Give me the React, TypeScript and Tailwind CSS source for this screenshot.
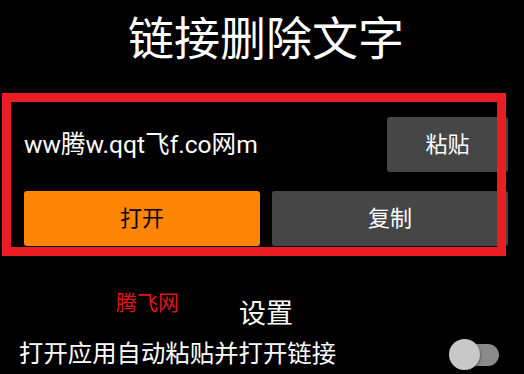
const sans = "font-['Roboto','Noto_Sans_CJK_SC',sans-serif]";

function Toggle() {
  return (
    <div className="relative h-[32px] w-[50px]">
      <div className="absolute left-[14px] top-[6px] h-[22px] w-[36px] rounded-full bg-[#8a8a8a]" />
      <div className="absolute left-0 top-[1px] h-[31px] w-[31px] rounded-full bg-[#c8c8c8] shadow-[0_1px_3px_rgba(0,0,0,0.6)]" />
    </div>
  );
}

export default function App() {
  return (
    <div className={`relative h-[374px] w-[524px] overflow-hidden bg-black text-white ${sans}`}>
      <div className="w-[532px] px-6">
        <h1 className="pt-[12px] text-center text-[46px] leading-[54px] text-white">链接删除文字</h1>

        <div className="mt-[51px] flex items-center">
          <div className="flex-1 text-[24.6px] leading-[55px] text-white">ww腾w.qqt飞f.co网m</div>
          <button className="h-[55px] w-[121px] rounded-[3px] bg-[#464646] text-[22px] text-white">粘贴</button>
        </div>

        <div className="mt-[19px] flex gap-3">
          <button className="h-[55px] flex-1 rounded-[3px] bg-[#ff8605] text-[22px] text-black">打开</button>
          <button className="h-[55px] flex-1 rounded-[3px] bg-[#464646] text-[22px] text-white">复制</button>
        </div>

        <div className="relative mt-[50px] text-center text-[27px] leading-[36px]">
          设置
          <span className="absolute left-[92px] top-[-8px] font-['Liberation_Serif','Noto_Sans_CJK_SC',serif] text-[21px] leading-[30px] text-[#e0141e]">
            腾飞网
          </span>
        </div>

        <div className="mt-[5px] flex items-center justify-between">
          <span className="-ml-[5px] text-[24.4px] leading-[34px]">打开应用自动粘贴并打开链接</span>
          <div className="mr-[9px]">
            <Toggle />
          </div>
        </div>
      </div>

      <div className="pointer-events-none absolute left-[2px] top-[93px] h-[163px] w-[504px] border-[9px] border-[#ec1c24]" />
    </div>
  );
}
